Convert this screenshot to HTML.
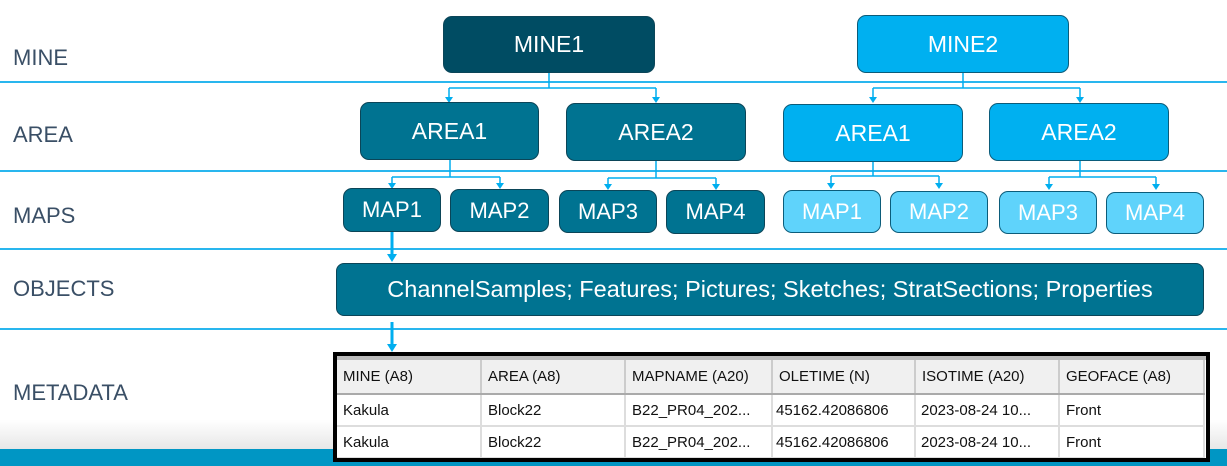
<!DOCTYPE html><html><head><style>
body{margin:0;width:1227px;height:466px;overflow:hidden;background:#fff;position:relative;font-family:"Liberation Sans",sans-serif}
.a{position:absolute}
.lbl{position:absolute;left:13px;font-size:22px;color:#3a4f66}
.hl{position:absolute;left:0;width:1227px;height:2px;background:#29b6ee}
.b{position:absolute;box-sizing:border-box;border-radius:9px;color:#fff;display:flex;align-items:center;justify-content:center;border:1px solid #0b4558}
.d{background:#004c63;font-size:23px}
.m{background:#007391;font-size:23px}
.c{background:#00b0f0;font-size:23px;border-color:#0b5c7a}
.l{background:#5fd3fb;font-size:22px;border-color:#0b5c7a}
.mp{background:#007391;font-size:22px}
table{border-collapse:collapse;font-size:15px;color:#111}
td{height:32px;padding:0 0 0 6px;border-right:2px solid #ddd;border-bottom:2px solid #ddd;white-space:nowrap;box-sizing:border-box}
tr.h td{background:#f0f0f0;border-right:2px solid #ccc;border-bottom:2px solid #aaa;height:34px}
</style></head><body>
<div class="hl" style="top:81px"></div>
<div class="hl" style="top:170px"></div>
<div class="hl" style="top:248px"></div>
<div class="hl" style="top:328px"></div>
<div class="lbl" style="top:45px">MINE</div>
<div class="lbl" style="top:122px">AREA</div>
<div class="lbl" style="top:203px">MAPS</div>
<div class="lbl" style="top:276px">OBJECTS</div>
<div class="lbl" style="top:380px">METADATA</div>
<div class="a" style="left:0;top:420px;width:1227px;height:30px;background:linear-gradient(#fff,#e6e6e6)"></div>
<div class="a" style="left:0;top:449px;width:1227px;height:17px;background:#0096c4"></div>
<svg class="a" style="left:0;top:0" width="1227" height="466" fill="#00aeef" stroke="#00aeef">
<g stroke-width="1.5" fill="none">
<path d="M549 73V88M449 88H656M449 88V97M656 88V97"/>
<path d="M963 73V88M873 88H1080M873 88V97M1080 88V97"/>
<path d="M450 160V177M392 177H500M392 177V183M500 177V183"/>
<path d="M656 161V178M608 178H716M608 178V184M716 178V184"/>
<path d="M873 162V176M831 176H939M831 176V183M939 176V183"/>
<path d="M1080 161V177M1049 177H1156M1049 177V184M1156 177V184"/>
</g>
<path d="M392 232V254" stroke-width="3"/><path d="M392 322V346" stroke-width="3"/>
<g stroke="none">
<path d="M445 97h8l-4 6z"/><path d="M652 97h8l-4 6z"/>
<path d="M869 97h8l-4 6z"/><path d="M1076 97h8l-4 6z"/>
<path d="M388 183h8l-4 6z"/><path d="M496 183h8l-4 6z"/>
<path d="M604 184h8l-4 6z"/><path d="M712 184h8l-4 6z"/>
<path d="M827 183h8l-4 6z"/><path d="M935 183h8l-4 6z"/>
<path d="M1045 184h8l-4 6z"/><path d="M1152 184h8l-4 6z"/>
<path d="M387 254h10l-5 8z"/><path d="M387 344h10l-5 8z"/>
</g></svg>
<div class="b d" style="left:443px;top:16px;width:212px;height:57px">MINE1</div>
<div class="b c" style="left:857px;top:15px;width:212px;height:58px">MINE2</div>
<div class="b m" style="left:360px;top:102px;width:179px;height:58px">AREA1</div>
<div class="b m" style="left:566px;top:103px;width:180px;height:58px">AREA2</div>
<div class="b c" style="left:783px;top:104px;width:180px;height:58px">AREA1</div>
<div class="b c" style="left:989px;top:103px;width:180px;height:58px">AREA2</div>
<div class="b mp" style="left:343px;top:188px;width:98px;height:44px">MAP1</div>
<div class="b mp" style="left:450px;top:189px;width:99px;height:43px">MAP2</div>
<div class="b mp" style="left:559px;top:190px;width:98px;height:43px">MAP3</div>
<div class="b mp" style="left:666px;top:190px;width:99px;height:44px">MAP4</div>
<div class="b l" style="left:783px;top:190px;width:98px;height:43px">MAP1</div>
<div class="b l" style="left:890px;top:191px;width:98px;height:42px">MAP2</div>
<div class="b l" style="left:999px;top:191px;width:98px;height:43px">MAP3</div>
<div class="b l" style="left:1106px;top:192px;width:98px;height:42px">MAP4</div>
<div class="b m" style="left:336px;top:263px;width:868px;height:53px;font-size:23.5px;border-radius:8px">ChannelSamples; Features; Pictures; Sketches; StratSections; Properties</div>
<div class="a" style="left:333px;top:352px;width:877px;height:110px;box-sizing:border-box;border:4px solid #000;background:#fff;overflow:hidden">
<div style="height:4px;background:#bbb"></div>
<table style="width:868px;margin-left:0">
<tr class="h"><td style="width:144px">MINE (A8)</td><td style="width:144px">AREA (A8)</td><td style="width:147px">MAPNAME (A20)</td><td style="width:143px">OLETIME (N)</td><td style="width:144px">ISOTIME (A20)</td><td>GEOFACE (A8)</td></tr>
<tr><td>Kakula</td><td>Block22</td><td>B22_PR04_202...</td><td style="padding-left:3px">45162.42086806</td><td style="padding-left:5px">2023-08-24 10...</td><td>Front</td></tr>
<tr><td>Kakula</td><td>Block22</td><td>B22_PR04_202...</td><td style="padding-left:3px">45162.42086806</td><td style="padding-left:5px">2023-08-24 10...</td><td>Front</td></tr>
</table></div>
</body></html>
